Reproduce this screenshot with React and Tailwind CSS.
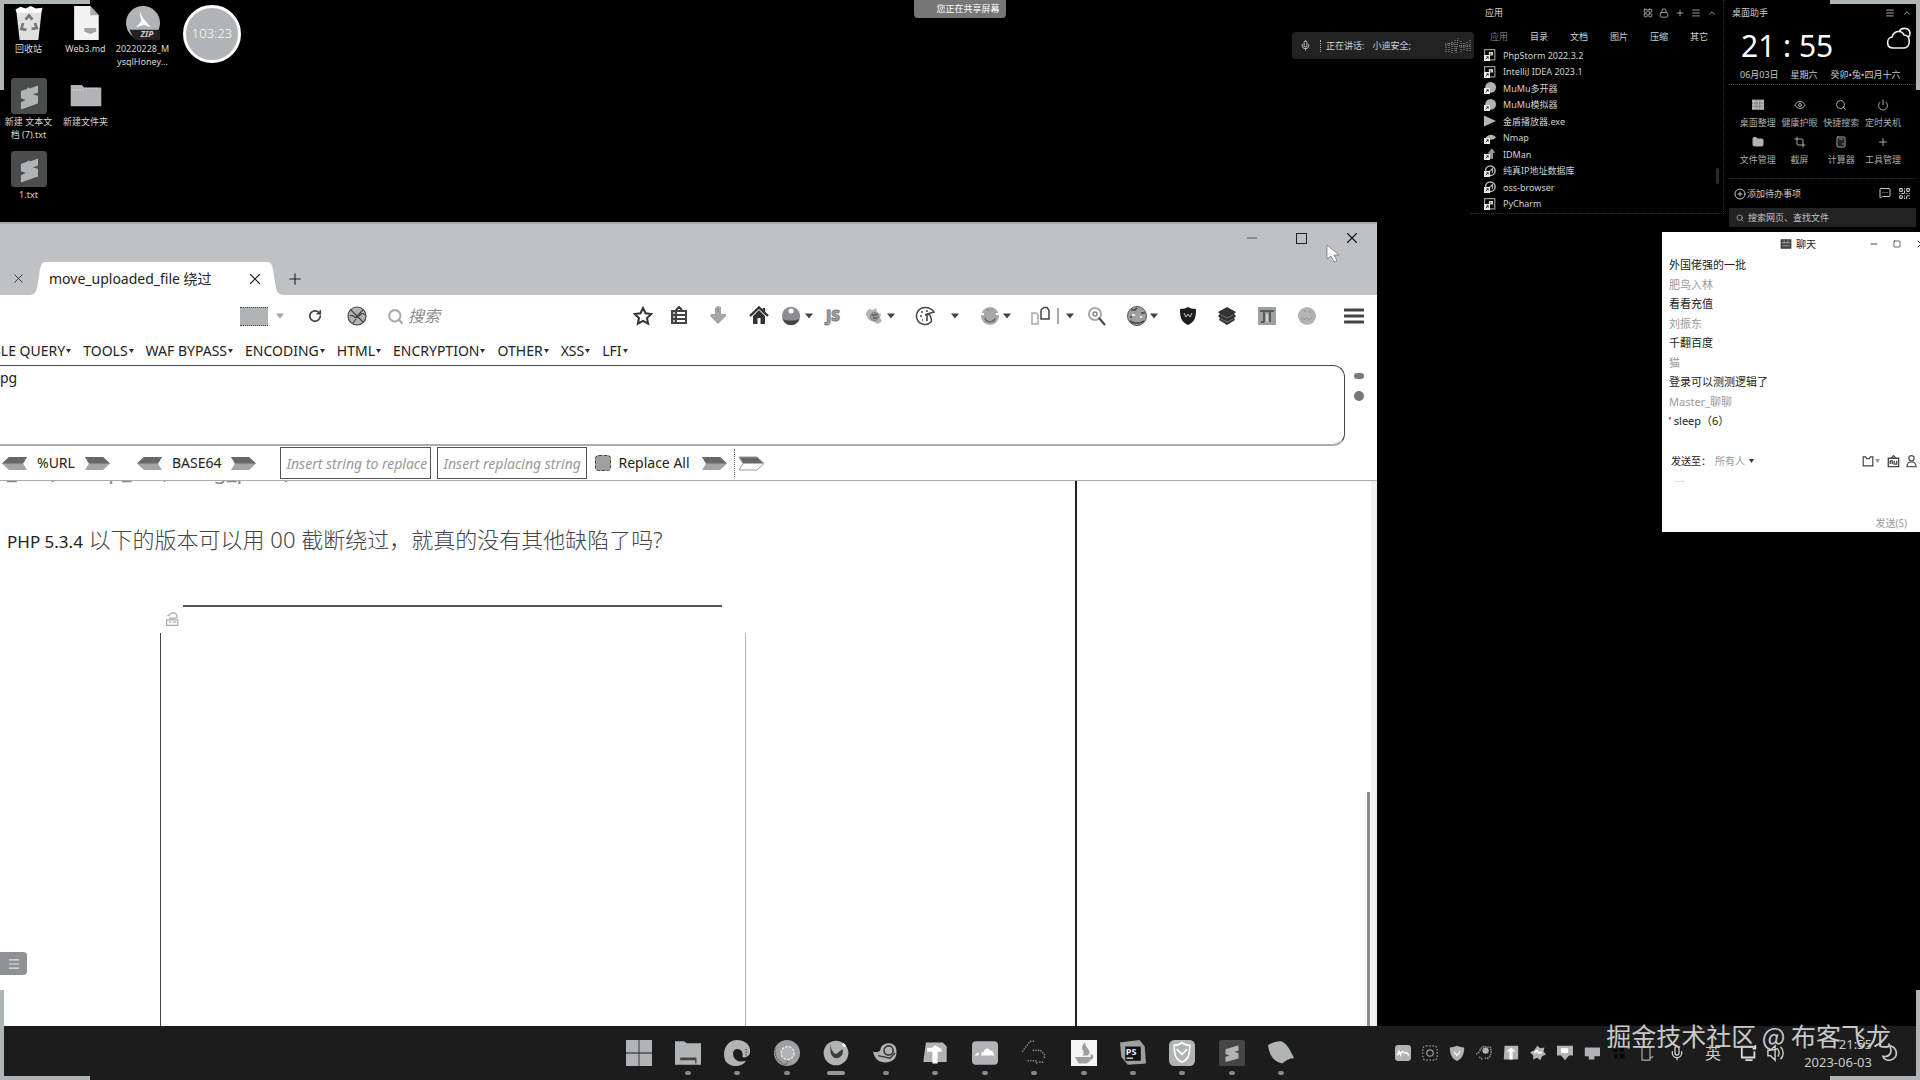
import React from "react";
import {
  Search, Power, Crop, Plus, Menu, ChevronUp, LayoutGrid, Lock, Eye, Folder, Calculator,
  CirclePlus, QrCode, MessageSquareMore, Mic, RotateCw, X, Minus, Square,
} from "lucide-react";

const G = "#b0b4b4";

function Svg({ s = 20, children, className = "" }) {
  return (
    <svg width={s} height={s} viewBox="0 0 20 20" fill="none" className={"shrink-0 " + className} aria-hidden="true">
      {children}
    </svg>
  );
}

const Sublime = ({ s = 36 }) => (
  <Svg s={s}>
    <rect width="20" height="20" rx="2" fill="#4b4d4d" />
    <path d="M5.500 7.200 9 6l.6-.8.8.6 4.600-1.600v4L12 9l3 .8v4.400L5.500 17.500v-4l2.600-1.300-2.600-1z" fill={G} />
  </Svg>
);

const DesktopItem = ({ icon, label }) => (
  <button className="flex w-[57px] flex-col items-center text-[9px] leading-[13px] text-[#d8d8d8]">
    <span className="flex h-9 items-center">{icon}</span>
    <span className="mt-[1px] whitespace-pre-line text-center">{label}</span>
  </button>
);

function DesktopIcons() {
  return (
    <div className="absolute left-0 top-[5px]">
      <div className="flex h-[73px]">
        <DesktopItem label="回收站" icon={
          <Svg s={34}>
            <path d="M2.5 2.5 17.5 2.5 15.5 20H4.5z" fill="#dfe1e1" />
            <path d="M2 2l3-1.500 3 1 3-1.500 3 1.500 4-.5-1 3H3z" fill="#fff" />
            <path d="m8 8 2-2.500 2 2.500M13.500 10l1 3-3 .5M8.500 14l-3-.5 1-3.500" stroke="#777" strokeWidth="1.600" />
          </Svg>} />
        <DesktopItem label="Web3.md" icon={
          <Svg s={34}>
            <path d="M3 0h9.500L17.500 5.500V20H3z" fill="#f2f2f2" />
            <path d="M12.500 0v5.500h5z" fill="#aaa" />
            <path d="M9 13h7v2l-3.500 1.500L9 15z" fill="#a0a3a3" />
          </Svg>} />
        <DesktopItem label={"20220228_M\nysqlHoney..."} icon={
          <Svg s={34}>
            <circle cx="10" cy="10" r="10" fill={G} />
            <path d="M2 14h18v6H5z" fill="#222" />
            <path d="m8 3 2 4 4.500 5.500-4-1.500-4.500 1.500 3-3.500z" fill="#fff" />
            <text x="8.500" y="18.500" fontSize="5" fontWeight="700" fontStyle="italic" fill="#ccc" fontFamily="Noto Sans">ZIP</text>
          </Svg>} />
      </div>
      <div className="flex h-[73px]">
        <DesktopItem label={"新建 文本文\n档 (7).txt"} icon={<Sublime />} />
        <DesktopItem label="新建文件夹" icon={
          <Svg s={34}>
            <path d="M1 3.500h6.500l1.500 1.500h10V16H1z" fill={G} />
            <path d="M2 6.500h6l1.500-1h7" stroke="#ddd" strokeWidth=".6" strokeDasharray="1 1" />
          </Svg>} />
      </div>
      <DesktopItem label="1.txt" icon={<Sublime />} />
    </div>
  );
}

const Caret = ({ className = "" }) => (
  <svg width="8" height="6" viewBox="0 0 8 6" className={"shrink-0 " + className} aria-hidden="true">
    <path d="M0 .5h8L4 5.500z" fill="#444" />
  </svg>
);

const Tool = ({ label, className = "", children }) => (
  <button aria-label={label} className={"shrink-0 " + className}>
    <Svg>{children}</Svg>
  </button>
);

function Toolbar() {
  return (
    <div className="flex h-[42px] items-center justify-between pl-[240px] pr-[13px]">
      <div className="flex items-center">
        <span className="h-[19px] w-7 border-y border-dotted border-[#444] bg-[#b0b4b4]" />
        <Caret className="ml-2 opacity-50" />
        <button aria-label="刷新" className="ml-6"><RotateCw size={14} strokeWidth={3} color="#444" /></button>
        <Tool label="网络" className="ml-[25px]">
          <circle cx="10" cy="10" r="9" fill={G} stroke="#444" strokeWidth="1.200" />
          <path d="m4 4 12 12M16 4l-7 7M3 10c3-3 5 4 8 1s4-5 7-2M6 17l3-4" stroke="#444" strokeWidth="1.200" />
        </Tool>
        <label htmlFor="q" className="ml-5"><Search size={17} strokeWidth={3} color="#aaa" /></label>
        <input id="q" aria-label="搜索" placeholder="搜索" className="ml-1 w-40 bg-transparent text-base italic outline-none placeholder:text-[#8d8d8d]" />
      </div>
      <div className="flex items-center">
        <Tool label="收藏">
          <path d="m10 2 2.500 5.300 5.800.7-4.300 4 1.100 5.700L10 14.900l-5.100 2.800L6 12 1.700 8l5.800-.7z" stroke="#333" strokeWidth="2" />
        </Tool>
        <Tool label="书签" className="ml-4">
          <path d="M2 4h16v14H2z" fill="#444" /><path d="M7 4l3-3 3 3" stroke="#333" strokeWidth="2" />
          <path d="M8 7h8M8 11h8M8 15h8" stroke="#fff" strokeWidth="2" /><path d="M4 7h2M4 11h2M4 15h2" stroke="#bbb" strokeWidth="2" />
        </Tool>
        <Tool label="下载" className="ml-[19px]">
          <path d="M7 2 9 0l4 1v7h5v2l-8 8-8-8 1-2h4z" fill="#a3a6a6" /><path d="M10 3v4" stroke="#666" strokeDasharray="1 1" />
        </Tool>
        <Tool label="主页" className="ml-[21px]">
          <path d="M1 10 10 1.500 19 10M15 2v5" stroke="#333" strokeWidth="2.400" />
          <path d="M4 10l6-6 6 6v8h-4.500v-6h-3v6H4z" fill="#333" />
        </Tool>
        <Tool label="代理" className="ml-3">
          <circle cx="10" cy="10" r="9.200" fill="#8b8e8e" /><path d="M2 13c3 2 13 2 16 0-2 8-14 8-16 0z" fill="#444" />
          <circle cx="10" cy="5" r="2.500" fill="#fff" />
        </Tool>
        <Caret className="ml-1" />
        <Tool label="JS" className="ml-[11px]">
          <text x="2" y="15" fontSize="15" fontWeight="900" fill="#9da0a0" stroke="#777" strokeWidth=".8" fontFamily="Open Sans">JS</text>
        </Tool>
        <Tool label="插件" className="ml-5">
          <path d="M2 7l3-4 4 1 3-2 1 4 4 2-1 4 2 3-4 3-4-2-5-2-3-5z" fill={G} />
          <circle cx="10.500" cy="10.500" r="4" fill="#999" stroke="#666" strokeDasharray="2 1" /><path d="M8 9h5M9 12h4" stroke="#444" />
        </Tool>
        <Caret className="ml-[3px]" />
        <Tool label="Cookie" className="ml-5">
          <path d="M10 1.500a8.500 8.500 0 1 0 6 14.500c1-1 0-3 0-4l-1-3-3-1 7-2c-2-3-5-4.500-9-4.500z" fill="#fff" stroke="#444" strokeWidth="1.500" />
          <path d="M6 6h2M11 5h2M5 10h2M10 9h2v6M7 14h1" stroke="#444" strokeWidth="1.600" />
        </Tool>
        <Caret className="ml-4" />
        <Tool label="用户代理" className="ml-[21px]">
          <circle cx="10" cy="10" r="9" fill="#a7aaaa" /><path d="M5 12c1 5 9 5 10 0" stroke="#666" strokeWidth="1.400" />
          <path d="M0 8h4M16 8h4" stroke="#fff" strokeWidth="2" /><path d="M8 3v2M12 3v1" stroke="#777" />
        </Tool>
        <Caret className="ml-[3px]" />
        <Tool label="复制" className="ml-5">
          <path d="M1 7h4l2 2v9H1z" stroke="#aaa" strokeWidth="1.500" /><path d="M10 13V4l3-2.500h3l2 3V13z" stroke="#444" strokeWidth="1.500" />
        </Tool>
        <span className="ml-[6px] h-4 w-[2px] bg-[#aaa]" />
        <Caret className="ml-[7px]" />
        <Tool label="查找" className="ml-[13px]">
          <circle cx="8" cy="8" r="6" stroke="#a5a8a8" strokeWidth="2" /><circle cx="8" cy="8" r="2" stroke="#888" strokeWidth="1.500" />
          <path d="m12 12 6 7" stroke="#444" strokeWidth="2" />
        </Tool>
        <Tool label="全局代理" className="ml-5">
          <circle cx="10" cy="10" r="9.500" fill="#9da0a0" stroke="#555" strokeWidth="1" />
          <path d="M4 4h4l2-2M14 7h4M3 15l4 2h6l4-2M4 10v2" stroke="#444" strokeWidth="1.500" /><path d="M5 9h3M13 11h2" stroke="#fff" strokeWidth="1.500" />
        </Tool>
        <Caret className="ml-[3px]" />
        <Tool label="盾牌" className="ml-5">
          <path d="M2 3c4 0 6-1 8-2 2 1 4 2 8 2 0 8-1 13-8 16C3 16 2 11 2 3z" fill="#1d1d1d" />
          <path d="m6 7 2 4 2-3 2 3 2-4" stroke="#ccc" strokeWidth="1" />
        </Tool>
        <Tool label="图层" className="ml-[19px]">
          <path d="m10 1 9 5-2 2 2 2-2 2 1 2-8 5-8-5 1-2-2-2 2-2-2-2z" fill="#333" />
          <path d="m4 9 6 3 6-3M4 13l6 3 6-3" stroke="#888" strokeWidth=".8" />
        </Tool>
        <Tool label="工具箱" className="ml-5">
          <path d="M1 1h18v18H1z" fill="#9da0a0" /><path d="M3 5h14M7 6v10M13 6v10M4 16h3" stroke="#444" strokeWidth="1.500" /><path d="M9 8h2v8H9z" fill="#ccc" />
        </Tool>
        <Tool label="地球" className="ml-5">
          <circle cx="10" cy="10" r="9" fill="#b0b4b4" /><path d="M4 12l3 2 2-2 3 2 4-3M7 5h2M12 6h2" stroke="#888" strokeDasharray="2 1" />
        </Tool>
        <Tool label="菜单" className="ml-[27px]">
          <path d="M1 4h18M1 10h18M1 16h18" stroke="#444" strokeWidth="3" strokeLinecap="round" />
        </Tool>
      </div>
    </div>
  );
}

const Arrow = ({ left, outline }) => (
  <button aria-label={left ? "解码" : "编码"} className="shrink-0">
    <svg width="25" height="15" viewBox="0 0 25 15" className={left ? "-scale-x-100" : ""} aria-hidden="true">
      <path d="M0 1h18l7 6.500L18 14H0l4-6.500z" fill={outline ? "#fff" : "#a3a6a6"} />
      <path d="M0 1h18l7 6.500H4z" fill="#666969" />
      {outline && <path d="M0 1h18l7 6.500L18 14H0l4-6.500z" stroke="#999" fill="none" />}
    </svg>
  </button>
);

const MENUS = ["TABLE QUERY", "TOOLS", "WAF BYPASS", "ENCODING", "HTML", "ENCRYPTION", "OTHER", "XSS", "LFI"];

function HackBar() {
  return (
    <div className="flex flex-col overflow-hidden border-b border-[#a8abab] text-sm text-[#222]">
      <nav className="-ml-6 flex h-7 items-center gap-3">
        {MENUS.map((m) => (
          <button key={m} className="flex items-center whitespace-nowrap">
            {m}
            <svg width="5" height="4" className="ml-[1px]" aria-hidden="true"><path d="M0 0h5L2.500 4z" fill="#333" /></svg>
          </button>
        ))}
      </nav>
      <div className="flex">
        <textarea aria-label="URL" defaultValue="pg" className="-ml-3 h-[81px] flex-1 resize-none rounded-xl border border-b-2 border-[#444] border-b-[#aaadad] bg-transparent pl-[11px] pt-[2px] leading-5 outline-none" />
        <div className="flex w-8 flex-col items-center gap-3 pr-1 pt-2">
          <button aria-label="收起" className="h-[6px] w-[10px] rounded-sm bg-[#777]" />
          <button aria-label="状态" className="size-[10px] rounded-full bg-[#777]" />
        </div>
      </div>
      <div className="flex h-[34px] items-center">
        <span className="ml-[2px] flex items-center gap-[10px]"><Arrow left />%URL<Arrow /></span>
        <span className="ml-[27px] flex items-center gap-[10px]"><Arrow left />BASE64<Arrow /></span>
        <input aria-label="Insert string to replace" placeholder="Insert string to replace" className="ml-6 h-8 w-[151px] border border-[#555] pl-[5px] italic outline-none placeholder:text-[#999]" />
        <input aria-label="Insert replacing string" placeholder="Insert replacing string" className="ml-[6px] h-8 w-[150px] border border-[#555] pl-[5px] italic outline-none placeholder:text-[#999]" />
        <label className="ml-2 flex items-center gap-[7px] whitespace-nowrap">
          <input type="checkbox" className="size-4 appearance-none rounded border border-dashed border-[#444] bg-[#9da0a0]" />
          Replace All
        </label>
        <span className="ml-3 flex items-center"><Arrow /></span>
        <span className="ml-[7px] h-7 border-l border-dotted border-[#555]" />
        <span className="ml-[4px] flex items-center"><Arrow outline /></span>
      </div>
    </div>
  );
}

const Flare = ({ flip }) => (
  <svg width="14" height="33" viewBox="0 0 14 33" className={"shrink-0 " + (flip ? "-scale-x-100" : "")} aria-hidden="true">
    <path d="M0 33C8 32 7 24 9 14 10 6 11 1 14 0v33z" fill="#fefefe" />
  </svg>
);

function Browser() {
  return (
    <section className="absolute bottom-[54px] left-0 right-[543px] top-[222px] flex flex-col overflow-hidden bg-[#fefefe]">
      <header className="flex h-[73px] shrink-0 items-end justify-between border-t-2 border-[#a9abab] bg-[#bfc2c2]">
        <div className="flex h-[33px] items-center">
          <button aria-label="关闭" className="ml-[11px]"><X size={15} strokeWidth={1.5} color="#333" /></button>
          <div className="ml-1 flex h-[33px]">
            <Flare />
            <div className="flex w-[225px] items-center justify-between bg-[#fefefe] pr-[5px] text-sm text-[#222]">
              <span className="ml-[5px] whitespace-nowrap">move_uploaded_file 绕过</span>
              <button aria-label="关闭标签页"><X size={18} strokeWidth={1.5} color="#222" /></button>
            </div>
            <Flare flip />
          </div>
          <button aria-label="新建标签页" className="ml-[3px]"><Plus size={18} strokeWidth={1.5} color="#222" /></button>
        </div>
        <div className="flex items-center self-start pr-4 pt-[5px]">
          <button aria-label="最小化" className="mr-9"><Minus size={16} strokeWidth={1.5} color="#555" /></button>
          <button aria-label="最大化" className="mr-9 size-[11px] border border-[#222]" />
          <button aria-label="关闭窗口"><X size={18} strokeWidth={1.5} color="#111" /></button>
        </div>
      </header>
      <Toolbar />
      <HackBar />
      <main className="flex min-h-0 flex-1">
        <article className="flex min-w-0 flex-1 flex-col text-[22px] text-[#333]">
          <div className="flex h-[4px] items-end overflow-hidden pl-[7px] text-[#888]">
            <p className="leading-[30px]">_file($temp_file, $img_path)</p>
          </div>
          <h2 className="mt-9 whitespace-nowrap pl-[7px] leading-9 text-[#444]">
            <span className="text-[17px] text-[#222]">PHP 5.3.4</span><span className="font-light"> 以下的版本可以用 00 截断绕过，就真的没有其他缺陷了吗?</span>
          </h2>
          <figure className="ml-[160px] mt-[45px] flex w-[586px] flex-1 flex-col">
            <div className="ml-[23px] mr-[24px] h-[2px] bg-[#555]" />
            <div className="flex h-[26px] pl-[5px] pt-1">
              <Svg s={16}>
                <path d="M3 6c5-1 2-4 8-4 4 1 6 6 2 7H5M2 11h14v7H2zM5 14h3M10 14h4" stroke="#aaa" strokeWidth="1.500" />
              </Svg>
            </div>
            <div className="flex-1 border-x border-l-[#444] border-r-[#b0b4b4]" />
          </figure>
        </article>
        <aside className="flex w-[302px] justify-end border-l-2 border-[#222]">
          <div className="flex w-[10px] flex-col justify-end border-r-[6px] border-[#f0f1f1]">
            <div className="h-[234px] w-[3px] bg-[#8a8d8d]" />
          </div>
        </aside>
      </main>
    </section>
  );
}

const APPS = [
  ["PhpStorm 2022.3.2", "sq"], ["IntelliJ IDEA 2023.1", "sq"], ["MuMu多开器", "rd"], ["MuMu模拟器", "rd"],
  ["金盾播放器.exe", "tri"], ["Nmap", "eye"], ["IDMan", "bolt"], ["纯真IP地址数据库", "ring"], ["oss-browser", "ring"], ["PyCharm", "sq"],
];

function AppIcon({ kind }) {
  return (
    <Svg s={12}>
      {kind === "sq" && <><path d="M1 1h17v17H1z" stroke="#999" strokeWidth="2" /><path d="M9 6h3v4H9zM14 5v6" stroke="#ccc" strokeWidth="2" /></>}
      {kind === "rd" && <circle cx="11" cy="9" r="9" fill={G} />}
      {kind === "tri" && <path d="M0 1 20 10 0 19z" fill={G} />}
      {kind === "eye" && <path d="M3 9c5-6 12-6 17 0-5 5-12 5-17 0z" fill={G} />}
      {kind === "bolt" && <path d="M6 9 13 1l6 7h-4v10H9V9z" fill="#999" />}
      {kind === "ring" && <><circle cx="10.500" cy="9.500" r="8" stroke={G} strokeWidth="2.500" /><path d="m7 13 7-7v7" stroke={G} strokeWidth="2" /></>}
      {kind !== "tri" && <><path d="M0 10h10v10H0z" fill="#eee" /><path d="m3 17 4-4M4 13h3v3" stroke="#222" strokeWidth="1.500" /></>}
    </Svg>
  );
}

function AppPanel() {
  return (
    <section className="absolute right-[196px] top-0 flex h-[214px] w-[254px] flex-col border-b border-r border-dotted border-[#333] text-[9px] text-[#d0d2d2]">
      <header className="flex h-[26px] items-center justify-between pl-[15px] pr-[6px]">
        <h2>应用</h2>
        <div className="flex gap-[6px] text-[#b8b8b8]">
          <LayoutGrid size={10} /><Lock size={10} /><Plus size={10} /><Menu size={10} /><ChevronUp size={10} />
        </div>
      </header>
      <nav className="flex h-[21px] items-center gap-[22px] pl-5">
        {["应用", "目录", "文档", "图片", "压缩", "其它"].map((t, i) => (
          <button key={t} className={i ? "" : "text-[#777]"}>{t}</button>
        ))}
      </nav>
      <div className="flex flex-1 justify-between pb-[1px]">
        <ul className="grid flex-1 grid-rows-10 pl-[14px]">
          {APPS.map(([n, k]) => (
            <li key={n} className="flex items-center"><button className="flex items-center gap-[7px]"><AppIcon kind={k} />{n}</button></li>
          ))}
        </ul>
        <span className="mr-1 mt-[121px] h-4 w-[3px] rounded bg-[#2b2b2b]" />
      </div>
    </section>
  );
}

const GridIcon = () => <Svg s={12}><path d="M0 1h20v17H0z" fill={G} /><path d="M0 7h20M0 12h20M7 1v17M13 1v17" stroke="#333" strokeDasharray="2 2" /></Svg>;
const ACTIONS = [
  ["桌面整理", <GridIcon />], ["健康护眼", <Eye size={12} />], ["快捷搜索", <Search size={12} />], ["定时关机", <Power size={12} />],
  ["文件管理", <Folder size={12} fill={G} />], ["截屏", <Crop size={12} />], ["计算器", <Calculator size={12} />], ["工具管理", <Plus size={12} />],
];

function Assistant() {
  return (
    <section className="absolute right-1 top-0 flex w-[190px] flex-col text-[9px] text-[#c8caca]">
      <header className="flex h-[26px] items-center justify-between pl-[6px] pr-1">
        <h2>桌面助手</h2>
        <div className="flex gap-[7px]"><Menu size={10} /><ChevronUp size={10} /></div>
      </header>
      <div className="flex h-10 items-center justify-between pl-[15px] pr-1 text-white">
        <time className="whitespace-pre text-[30px] leading-10">21 : 55</time>
        <svg width="26" height="24" viewBox="0 0 26 24" fill="none" stroke="#eee" strokeWidth="1.600" className="self-start" aria-hidden="true">
          <path d="M7 22c-7 0-7-10-1-11C8 4 16 4 18 9c7 0 7 13 0 13zM13 6c2-5 10-5 11 1 0 3-1 4-2 5" />
        </svg>
      </div>
      <div className="ml-[3px] flex h-[19px] items-center whitespace-nowrap border-b border-dotted border-[#444] pl-[11px]">
        <span>06月03日</span><span className="ml-3">星期六</span><span className="ml-[13px]">癸卯•兔•四月十六</span>
      </div>
      <div className="ml-[3px] grid grid-cols-4 gap-y-[6px] border-b border-dotted border-[#333] pb-[11px] pl-2 pr-3 pt-[14px] text-[#a8abab]">
        {ACTIONS.map(([t, ic]) => (
          <button key={t} className="flex flex-col items-center gap-[5px] leading-[14px]">{ic}<span className="whitespace-nowrap">{t}</span></button>
        ))}
      </div>
      <div className="flex h-[29px] items-center justify-between pl-2 pr-[5px]">
        <button className="flex items-center gap-[1px]"><CirclePlus size={12} />添加待办事项</button>
        <span className="flex gap-[7px]"><MessageSquareMore size={12} /><QrCode size={13} /></span>
      </div>
      <label className="ml-[3px] flex h-[19px] items-center gap-1 bg-[#222] pl-[7px]">
        <Search size={8} />
        <input aria-label="搜索网页、查找文件" placeholder="搜索网页、查找文件" className="min-w-0 flex-1 bg-transparent outline-none placeholder:text-[#c0c2c2]" />
      </label>
    </section>
  );
}

const CHAT = ["外国佬强的一批", "肥鸟入林", "看看充值", "刘振东", "千翻百度", "猫", "登录可以测测逻辑了", "Master_聊聊", "’ sleep（6）"];

function Chat() {
  return (
    <section className="absolute -right-[12px] top-[232px] flex h-[300px] w-[270px] flex-col bg-[#fefefe] text-[11px] text-[#222]">
      <header className="flex h-6 shrink-0 items-center pl-[118px]">
        <Svg s={12}><path d="M1 2h18v16H1z" fill="#444" /><path d="M3 8h14M4 13h12M7 4v4M13 4v4" stroke="#bbb" strokeWidth="1.300" /></Svg>
        <h2 className="ml-1 text-[10px]">聊天</h2>
        <div className="ml-auto flex items-center gap-[14px] pr-[5px]">
          <button aria-label="最小化"><Minus size={10} /></button>
          <button aria-label="最大化"><Square size={8} /></button>
          <button aria-label="关闭"><X size={12} /></button>
        </div>
      </header>
      <ul className="mt-[1px] grid h-[176px] grid-rows-9 pl-[7px]">
        {CHAT.map((t, i) => (
          <li key={t} className={i % 2 ? "text-[#999c9c]" : ""}>{t}</li>
        ))}
      </ul>
      <div className="mt-4 flex h-6 items-center pl-[9px] text-[10px]">
        <span>发送至：</span>
        <button className="ml-1 flex items-center gap-1 text-[#999]">所有人<svg width="5" height="4" aria-hidden="true"><path d="M0 0h5L2.500 4z" fill="#333" /></svg></button>
        <div className="ml-auto flex items-center pr-[14px]">
          <button aria-label="文件"><Svg s={12}><path d="M2 3h4l2 3h4l2-3h4v15H2z" stroke="#444" strokeWidth="2" /></Svg></button>
          <svg width="5" height="4" className="ml-[1px]" aria-hidden="true"><path d="M0 0h5L2.500 4z" fill="#999" /></svg>
          <button aria-label="图片" className="ml-[7px]"><Svg s={13}><path d="M2 5h16v13H2zM7 4l3-3 3 3M5 14V9h3v5M11 9v5h4V9" stroke="#444" strokeWidth="2" /></Svg></button>
          <button aria-label="用户" className="ml-[5px]"><Svg s={13}><circle cx="10" cy="5" r="4" stroke="#555" strokeWidth="2" /><path d="M3 18c0-10 14-10 14 0z" stroke="#555" strokeWidth="2" /></Svg></button>
        </div>
      </div>
      <textarea aria-label="消息" placeholder="....." className="ml-3 h-9 resize-none text-[8px] outline-none placeholder:text-[#bbb]" />
      <button className="mb-[1px] mr-[25px] mt-auto self-end text-[10px] text-[#999]">发送(S)</button>
    </section>
  );
}

const TASKS = [
  ["开始", <path d="M0 0h9.700v9.700H0zM10.300 0H20v9.700h-9.700zM0 10.300h9.700V20H0zM10.300 10.300H20V20h-9.700z" fill={G} />],
  ["资源管理器", <><path d="M0 1h7l2 1.500h11V19H0z" fill={G} /><path d="M4 14h12v4M4 15h12" stroke="#444" strokeWidth="1" /></>],
  ["Edge", <><path d="M10 0c7 0 11 5 10 10-1 3-4 4-6 3 1-2 0-6-4-6-3 0-4 4-2 7 2 3 6 3 9 2-3 5-12 6-16 0C-2 9 2 0 10 0z" fill={G} /><path d="M17 12v-5" stroke="#555" strokeDasharray="1 1" /></>],
  ["Chrome", <><circle cx="10" cy="10" r="10" fill="#9da0a0" /><circle cx="10.500" cy="10" r="5" fill={G} stroke="#eee" strokeDasharray="2 1" /><path d="M1 7c-1 7 4 11 8 12l2-3" stroke="#555" strokeDasharray="1 1" /></>],
  ["Firefox", <><circle cx="10" cy="10" r="9.500" fill={G} /><path d="M6 3c0 4 1 6 4 8l5-4c1 4-1 7-5 7-4-1-5-5-4-11z" fill="#3b3b3b" /><path d="m15 3 2 2" stroke="#fff" strokeWidth="2" /></>],
  ["截图", <><path d="M0 9c4 1 6 0 6-3 2-5 12-5 12 2 1 8-6 10-11 9-4-1-6-4-7-8z" fill={G} /><circle cx="12" cy="8" r="3.500" stroke="#333" strokeWidth="1.200" /><path d="m4 12 9 2 4-4" stroke="#333" /></>],
  ["文本", <><path d="M3 2h13l3 3v12H1z" fill={G} /><path d="M4 6h4l2-2 5 3v2h-3v9H8V9H4z" fill="#fff" /></>],
  ["云盘", <><rect y="1" width="20" height="18" rx="3" fill={G} /><path d="m2 12 3-3v3zM7 12c0-3 2-3 2-3 1-3 4-3 5-1 2 0 3 2 3 4z" fill="#fff" /></>],
  ["终端", <path d="m1 9 6-8h3M9 8h6l3 3v3M5 16h7v3M14 17h3" stroke="#8d9090" strokeWidth="1.200" strokeDasharray="1 1" />],
  ["Java", <><path d="M0 0h20v20H0z" fill="#f5f5f5" /><path d="M11 2c-6 5 1 6-2 10h4c4-4-2-5-2-10zM3 13h12v3l-3 2H6zM15 11c3 0 3 4 0 4" fill="#9da0a0" /></>],
  ["PhpStorm", <><path d="M0 2 15 0l4 5 1 13-14 1-5-6z" fill="#9da0a0" /><path d="M4 5h12v11H4z" fill="#111" /><text x="4.500" y="11.500" fontSize="7" fontWeight="700" fill="#eee" fontFamily="Noto Sans">PS</text><path d="M5 14h5" stroke="#eee" /></>],
  ["安全中心", <><rect width="20" height="20" rx="4" fill={G} /><path d="M4 4c3 0 5-1 6-2 1 1 3 2 6 2 0 7-1 11-6 13-5-2-6-6-6-13z" stroke="#fff" strokeWidth="1.200" /><path d="m6 7 4 4 4-4" stroke="#fff" strokeWidth="1.200" /></>],
  ["Sublime", <><rect width="20" height="20" rx="2" fill="#454747" /><path d="M5 7.200 15 4v4.200L12 9l3 1.200v4L5 17v-4.200l3-.9-3-1.200z" fill={G} /></>],
  ["便签", <path d="M0 4c5-3 10-4 12-2 4 3 6 8 8 12-3 0-5 1-9 4C4 17 1 11 0 4z" fill={G} />],
];

const TRAY = [
  <><rect width="20" height="20" rx="4" fill={G} /><path d="m3 13 2-5 2 4c1-5 4-4 5-2 3-1 5 1 5 3" stroke="#fff" strokeWidth="2" /></>,
  <><rect x="1" y="1" width="18" height="18" rx="4" stroke="#999" strokeDasharray="2 2" strokeWidth="1.500" /><circle cx="10" cy="10" r="4" stroke="#999" strokeWidth="1.500" /></>,
  <><path d="M1 3c4 0 7-1 9-2 2 1 5 2 9 2 0 9-3 14-9 17C4 17 1 12 1 3z" fill={G} /><path d="m6 9 4 4 4-5" stroke="#fff" strokeWidth="1.500" /></>,
  <><path d="M0 11c5 0 5-9 10-9l8 1 1 6c-1 7-5 9-8 7M4 15l4 3" stroke="#888" strokeDasharray="2 1" strokeWidth="2" /><circle cx="12" cy="7" r="4" fill={G} /></>,
  <><path d="M2 1h17v17H1z" fill={G} /><path d="m4 8 6-5 6 5h-4v10H8V8z" fill="#fff" /></>,
  <><path d="m9 1 4 3 5-1-1 5 3 4-5 2-2 5-4-3-5 2v-5l-4-4 5-2z" fill={G} /><path d="m5 10 4-3 2 3 4-1" stroke="#fff" strokeWidth="2" /></>,
  <><path d="M0 1h20v12h-5l-5 6-5-6H0z" fill={G} /><path d="M5 4h9v6H5z" fill="#fff" /></>,
  <path d="M1 3h19v11h-7v4H6v-4H1z" fill={G} />,
  <path d="M3 5h5v4H3zM11 3h5v5h-5zM4 12h4v5H4zM11 11h6v6h-6z" fill="#050505" />,
  <path d="M5 3h10v16H5zM15 17l4-3" stroke="#aaa" strokeWidth="1.500" />,
];

function Taskbar() {
  return (
    <footer className="absolute inset-x-0 bottom-0 flex h-[54px] items-center justify-between bg-[#1c1c1c] pl-[625px] pr-[22px]">
      <nav className="flex w-[670px] justify-between">
        {TASKS.map(([t, d], i) => (
          <button key={t} aria-label={t} className="flex w-[27px] flex-col items-center gap-[5px] pt-[9px]">
            <Svg s={26}>{d}</Svg>
            <span className={i === 0 ? "h-1" : i === 4 ? "h-1 w-[18px] rounded bg-[#999]" : "h-1 w-[6px] rounded bg-[#888]"} />
          </button>
        ))}
      </nav>
      <div className="flex items-center text-[#c8caca]">
        <div className="flex gap-[11px]">{TRAY.map((d, i) => <Svg key={i} s={16}>{d}</Svg>)}</div>
        <Mic size={16} className="ml-[15px]" />
        <span className="ml-5 text-base leading-4">英</span>
        <Svg s={18} className="ml-[19px]"><path d="M14 3H2v12h14V8M6 18h8M17 1v4h-3" stroke="#ddd" strokeWidth="2" /></Svg>
        <Svg s={18} className="ml-[9px]"><path d="M1 7h3l5-5v16l-5-5H1zM12 6c2 2 2 6 0 8M15 3c4 4 4 10 0 14" stroke="#ccc" strokeWidth="1.600" /></Svg>
        <time className="ml-[17px] w-[70px] text-right text-[13px] leading-[18px]">21:55<br />2023-06-03</time>
        <Svg s={16} className="ml-[10px]"><path d="M10 1c9 2 12 15 0 18-4 1-8-2-9-5 9 2 12-5 9-13z" stroke="#ccc" strokeWidth="2" /></Svg>
      </div>
    </footer>
  );
}

export default function App() {
  return (
    <div className="relative h-screen w-full overflow-hidden bg-black [font-family:'Noto_Sans','Noto_Sans_CJK_SC',sans-serif]">
      <DesktopIcons />
      <div className="absolute left-[183px] top-[5px] flex size-[58px] items-center justify-center rounded-full border-[3px] border-white bg-[#b0b4b4] text-[13px] font-light text-white">103:23</div>
      <div className="absolute left-[914px] top-0 flex h-[18px] w-[92px] items-center justify-center rounded-b bg-[#777] pl-4 text-[9px] text-white">您正在共享屏幕</div>
      <div className="absolute right-[446px] top-8 flex h-[27px] w-[182px] items-center rounded bg-[#222] pl-2 text-[9px] text-[#d0d0d0]">
        <Mic size={11} /><span className="ml-[9px] h-3 border-l border-dotted border-[#aaa]" />
        <span className="ml-[5px]">正在讲话:</span><span className="ml-2">小迪安全;</span>
        <svg width="28" height="18" viewBox="0 0 28 18" className="ml-auto mr-[2px]" fill="none" stroke="#999" strokeDasharray="1 1" aria-hidden="true">
          <path d="M2 8v8M5 6v10M8 5v11M11 3v12M14 1l-2 15M17 4v11M20 6v8M23 5v9M26 3v12M1 7h9M15 9h12" />
        </svg>
      </div>
      <AppPanel />
      <Assistant />
      <Browser />
      <Chat />
      <button aria-label="目录" className="absolute bottom-[105px] left-0 flex h-[23px] w-[27px] items-center justify-center rounded-r bg-[#8f9292]">
        <Menu size={14} color="#e5e5e5" />
      </button>
      <Taskbar />
      <div className="pointer-events-none absolute bottom-[27px] right-[29px] whitespace-nowrap text-[25px] leading-9 text-[#c9c9c9] [font-family:'Noto_Sans_CJK_SC',sans-serif]">掘金技术社区 @ 布客飞龙</div>
      <svg width="15" height="20" viewBox="0 0 15 20" className="pointer-events-none absolute right-[579px] top-[244px]" aria-hidden="true">
        <path d="M1 1v14l4-3 3 6 3-1-3-6h5z" fill="#fff" stroke="#777" strokeWidth=".8" />
      </svg>
      <div className="pointer-events-none absolute left-0 top-0 size-[90px] border-l-4 border-t-4 border-[#b0b4b4]" />
      <div className="pointer-events-none absolute right-0 top-0 size-[90px] border-r-4 border-t-4 border-[#b0b4b4]" />
      <div className="pointer-events-none absolute bottom-0 left-0 size-[90px] border-b-4 border-l-4 border-[#b0b4b4]" />
      <div className="pointer-events-none absolute bottom-0 right-0 size-[90px] border-b-4 border-r-4 border-[#b0b4b4]" />
    </div>
  );
}
